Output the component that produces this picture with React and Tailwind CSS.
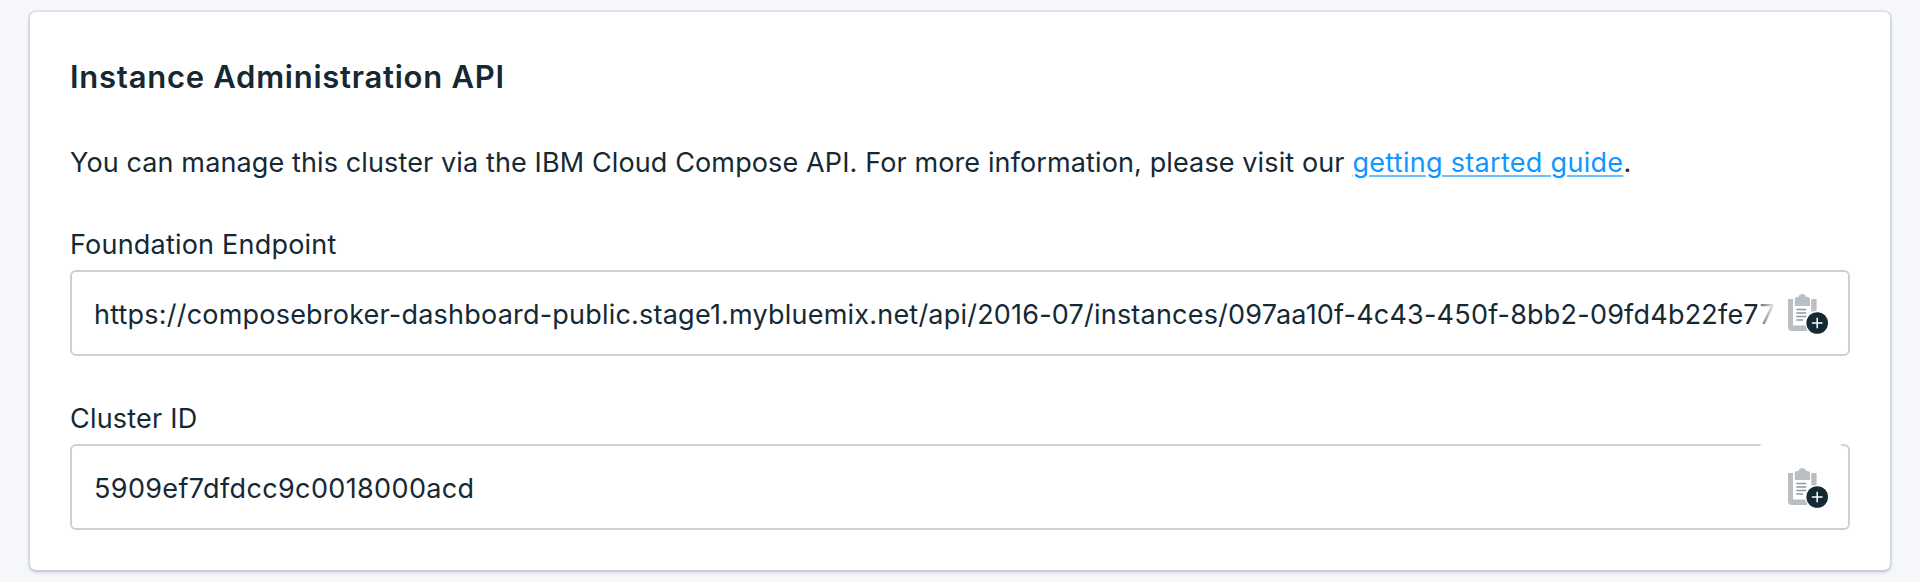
function CopyIcon() {
  return (
    <svg viewBox="0 0 40 40" className="block h-10 w-10" fill="none">
      <path d="M0 5H5V31.5H19V37H4Q0 37 0 33Z" fill="#b9bfc3" />
      <path d="M23.2 5H28.6V17.5H23.2Z" fill="#b9bfc3" />
      <path d="M6.8 5.5Q6.8 3 9.3 3H10.3C11 1 12.5 0 14.3 0C16 0 17.5 1 18.2 3H19.5Q22 3 22 5.5V12H6.8Z" fill="#b9bfc3" />
      <path d="M8.3 15.5H18.3M8.3 19H18.3M8.3 22.5H18.3M8.3 26H15" stroke="#8f999f" strokeWidth="1.4" />
      <circle cx="29.2" cy="29" r="12" fill="#fff" />
      <circle cx="29.2" cy="29" r="10.8" fill="#152935" />
      <path d="M23.9 29H34.5M29.2 23.7V34.3" stroke="#fff" strokeWidth="1.5" />
    </svg>
  );
}

function Field({ label, children, veil }) {
  return (
    <div className="flex flex-col">
      <label className="text-[27px] leading-10 tracking-[0.21px]">{label}</label>
      <div className="relative mt-[5px] flex h-[86px] items-center rounded-[6px] border-2 border-[#cdd1d4] pt-[3px] pl-[22px]">
        <div className="w-[1690px] overflow-hidden text-[27px] leading-10 whitespace-nowrap">{children}</div>
        <div className={veil} />
        <button type="button" aria-label={`Copy ${label}`} className="absolute top-[22px] right-[20px]">
          <CopyIcon />
        </button>
      </div>
    </div>
  );
}

export default function App() {
  return (
    <main className="h-[582px] overflow-hidden bg-[#f5f7fb] pt-3 pl-[30px] font-['Inter',sans-serif] text-[#152935]">
      <section className="flex h-[558px] w-[1860px] flex-col rounded-[6px] bg-white px-10 pt-[45px] shadow-[0_0_0_2px_rgba(21,41,53,0.08),0_2px_4px_rgba(21,41,53,0.2)]">
        <h2 className="text-[31px] leading-10 font-semibold tracking-[0.74px] whitespace-nowrap"><span>Instance Administration API</span></h2>
        <p className="mt-[46px] text-[27px] leading-10 tracking-[0.12px] whitespace-nowrap">
          You can manage this cluster via the IBM Cloud Compose API. For more information, please visit our{" "}
          <a href="#guide" className="tracking-[0.3px] text-[#0f97ff] underline decoration-[#6ebfff] decoration-2 underline-offset-[3px]">getting started guide</a>.
        </p>
        <div className="mt-[42px] flex w-[1780px] flex-col gap-[43px]">
          <Field
            label="Foundation Endpoint"
            veil="absolute top-0 right-[72px] h-20 w-[19px] bg-linear-to-r from-white/20 to-white"
          >
            <span className="tracking-[0.21px]">https://composebroker-dashboard-public.stage1.mybluemix.net/api/2016-07/instances/097aa10f-4c43-450f-8bb2-09fd4b22fe77</span>
          </Field>
          <Field
            label="Cluster ID"
            veil="absolute -top-[3px] right-[5px] h-20 w-[84px] rounded-[6px] bg-white"
          >
            <span className="tracking-[0.36px]">5909ef7dfdcc9c0018000acd</span>
          </Field>
        </div>
      </section>
    </main>
  );
}
